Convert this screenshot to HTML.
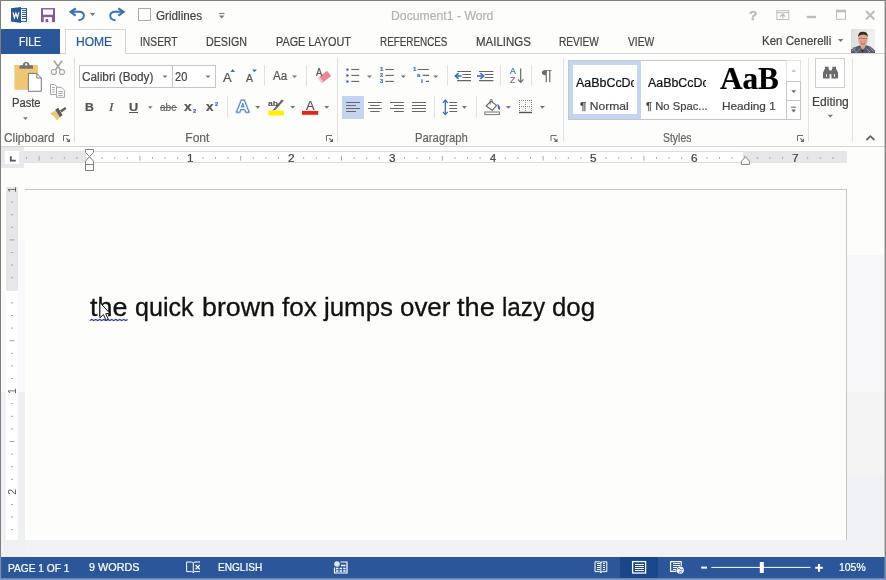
<!DOCTYPE html>
<html lang="en"><head><meta charset="utf-8"><title>Document1 - Word</title>
<style>
html,body{margin:0;padding:0}
body{width:886px;height:580px;position:relative;overflow:hidden;background:#fff;font-family:"Liberation Sans",sans-serif}
.a{position:absolute}
.t{position:absolute;transform-origin:0 0;-webkit-text-stroke:0.22px currentColor;white-space:pre;line-height:1;font-family:"Liberation Sans",sans-serif}
svg{position:absolute;overflow:visible}
.sep{position:absolute;width:1px;background:#e1e1e1}
.arr{position:absolute;width:0;height:0;border-left:2.5px solid transparent;border-right:2.5px solid transparent;border-top:3px solid #777}

</style></head>
<body>
<!-- window frame -->
<div class="a" style="left:0;top:0;width:886px;height:580px;background:#fdfdfc"></div>
<!-- document area bg -->
<div class="a" style="left:0;top:147px;width:886px;height:410px;background:#fdfdfc"></div>
<div class="a" style="left:847px;top:255px;width:38px;height:137px;background:#f8f8fb"></div>
<div class="a" style="left:847px;top:392px;width:38px;height:84px;background:#f4f4f4"></div>
<div class="a" style="left:847px;top:476px;width:38px;height:81px;background:#f1f2f6"></div>
<div class="a" style="left:0;top:540px;width:886px;height:17px;background:#f1f2f5"></div>
<div class="a" style="left:1px;top:291px;width:24px;height:101px;background:#f8f9fb"></div>
<div class="a" style="left:18px;top:240px;width:7px;height:60px;background:#f8f9fb"></div>
<div class="a" style="left:1px;top:392px;width:24px;height:165px;background:#eff0f3"></div>
<!-- page -->
<div class="a" style="left:25px;top:189px;width:822px;height:351px;border:1px solid #c6c6c6;border-bottom:none;border-left:none;background:#fdfdfc;box-sizing:border-box"></div>
<!-- ribbon bottom border -->
<div class="a" style="left:0;top:146px;width:886px;height:1px;background:#d4d4d4"></div>
<!-- tab row line -->
<div class="a" style="left:0;top:53px;width:886px;height:1px;background:#d4d4d4"></div>
<!-- FILE tab -->
<div class="a" style="left:1px;top:29px;width:59px;height:25px;background:#2b579a"></div>
<!-- HOME tab -->
<div class="a" style="left:65px;top:29px;width:61px;height:25px;background:#fdfdfc;border:1px solid #d4d4d4;border-bottom:none;box-sizing:border-box"></div>
<!-- status bar -->
<div class="a" style="left:0;top:557px;width:886px;height:23px;background:#2b579a"></div>
<div class="a" style="left:620px;top:557px;width:38px;height:23px;background:#19478a"></div>
<!-- ruler -->
<div class="a" style="left:1px;top:147px;width:23px;height:21px;background:#e9e9eb"></div>
<div class="a" style="left:5px;top:151px;width:14px;height:13px;background:#fff"></div>
<div class="a" style="left:24px;top:151px;width:823px;height:12px;background:#fff;border-top:1px solid #dedede;border-bottom:1px solid #dedede;box-sizing:border-box"></div>
<div class="a" style="left:24px;top:151px;width:61.5px;height:12px;background:#e6e6e8"></div>
<div class="a" style="left:743px;top:151px;width:104px;height:12px;background:#e6e6e8"></div>
<!-- vertical ruler -->
<div class="a" style="left:6px;top:187px;width:11.5px;height:353px;background:#fff"></div>
<div class="a" style="left:6px;top:187px;width:11.5px;height:104px;background:#e6e6e8"></div>
<!-- ribbon boxes -->
<div class="a" style="left:79px;top:65px;width:137px;height:23px;border:1px solid #c6c6c6;box-sizing:border-box;background:#fff"></div>
<div class="a" style="left:172px;top:65px;width:1px;height:23px;background:#c6c6c6"></div>
<div class="a" style="left:342px;top:96px;width:22px;height:23px;background:#c3d5f0"></div>
<!-- styles gallery -->
<div class="a" style="left:568px;top:60px;width:233px;height:60px;border:1px solid #c6c6c6;box-sizing:border-box;background:#fff"></div>
<div class="a" style="left:569px;top:61px;width:72px;height:58px;background:#c3d5f0"></div>
<div class="a" style="left:573px;top:65px;width:64px;height:49px;background:#fff"></div>
<div class="a" style="left:786px;top:60px;width:15px;height:22px;border:1px solid #e3e3e3;box-sizing:border-box;background:#fff"></div>
<div class="a" style="left:786px;top:81px;width:15px;height:20px;border:1px solid #c6c6c6;box-sizing:border-box;background:#fff"></div>
<div class="a" style="left:786px;top:100px;width:15px;height:20px;border:1px solid #c6c6c6;box-sizing:border-box;background:#fff"></div>
<!-- editing box -->
<div class="a" style="left:815px;top:58px;width:30px;height:30px;border:1px solid #d0d0d0;box-sizing:border-box;background:#fff"></div>
<!-- separators -->
<div class="sep" style="left:74px;top:58px;height:84px"></div>
<div class="sep" style="left:337px;top:58px;height:84px"></div>
<div class="sep" style="left:563px;top:58px;height:84px"></div>
<div class="sep" style="left:808px;top:58px;height:84px"></div>
<div class="sep" style="left:852px;top:58px;height:84px"></div>
<div class="sep" style="left:264px;top:65px;height:21px"></div>
<div class="sep" style="left:306px;top:65px;height:21px"></div>
<div class="sep" style="left:227px;top:96px;height:22px"></div>
<div class="sep" style="left:447px;top:65px;height:21px"></div>
<div class="sep" style="left:500px;top:65px;height:21px"></div>
<div class="sep" style="left:531px;top:65px;height:21px"></div>
<div class="sep" style="left:434px;top:96px;height:22px"></div>
<div class="sep" style="left:476px;top:96px;height:22px"></div>
<!-- checkbox -->
<div class="a" style="left:138px;top:8px;width:13px;height:13px;border:1px solid #ababab;box-sizing:border-box;background:#fff"></div>
<div class="a" style="left:129px;top:112px;width:8.5px;height:1px;background:#555"></div>
<div class="a" style="left:160px;top:107px;width:16.5px;height:1px;background:#666"></div>
<svg width="886" height="580" viewBox="0 0 886 580" style="left:0;top:0">
<!-- Word icon -->
<g>
<rect x="20.5" y="8.6" width="6" height="12.8" fill="#fff" stroke="#2b579a" stroke-width="1"/>
<path d="M21.5 10.5h4M21.5 12.5h4M21.5 14.5h4M21.5 16.5h4M21.5 18.5h4" stroke="#2b579a" stroke-width="1" shape-rendering="crispEdges"/>
<path d="M11 8.3 L21 7 L21 23 L11 21.6Z" fill="#2b579a"/>
<path d="M13 12.4 L14.4 17.6 L15.9 13.4 L17.4 17.6 L18.8 12.4" fill="none" stroke="#fff" stroke-width="1.25"/>
</g>
<!-- Save icon -->
<g>
<rect x="41" y="8.1" width="14" height="14" fill="#83589f"/>
<rect x="43" y="9.5" width="10" height="5.2" fill="#fff"/>
<rect x="43.7" y="17.2" width="8.3" height="4.9" fill="#fff"/>
<rect x="45.6" y="19" width="2.7" height="3.1" fill="#83589f"/>
</g>
<!-- Undo -->
<g fill="none" stroke="#3b6fb6" stroke-width="1.9">
<path d="M71 11.8 H79.5 C85.5 11.8 85.5 19.5 78.5 20.2"/>
<path d="M75.8 8.3 L70.6 11.8 L75.6 15.6" stroke-width="2.2" stroke-linejoin="miter"/>
</g>
<path d="M89.9 13 h5.2 l-2.6 2.9z" fill="#777"/>
<!-- Redo -->
<g fill="none" stroke="#3b6fb6" stroke-width="1.9">
<path d="M122.6 11.8 H115 C108.5 11.8 108.5 19.5 115.5 20.2"/>
<path d="M118.3 8.3 L123.5 11.8 L118.5 15.6" stroke-width="2.2" stroke-linejoin="miter"/>
</g>
<!-- QAT customize -->
<path d="M219 13.5h5.5" stroke="#777" stroke-width="1"/>
<path d="M219 15.5 h5.4 l-2.7 3z" fill="#777"/>
<!-- window controls -->
<g stroke="#bdbdbd" fill="none">
<rect x="776.8" y="10.7" width="12" height="8.8" stroke-width="1"/>
<path d="M776.8 12.7h12" stroke-width="1"/>
<path d="M782.8 18.6v-4.6M780.2 16.6l2.6-2.7l2.6 2.7" stroke-width="1.2"/>
<path d="M806.7 17h9.4" stroke-width="2.4"/>
<rect x="836.5" y="11" width="9" height="8.3" stroke-width="1"/>
<path d="M836 11h10" stroke-width="2.6"/>
<path d="M866 11l8.4 8.4M874.4 11l-8.4 8.4" stroke-width="2.1"/>
</g>
<!-- user dropdown -->
<path d="M838 39 h5.4 l-2.7 2.9z" fill="#777"/>
<!-- avatar -->
<g>
<defs><clipPath id="av"><rect x="851" y="29" width="24" height="24"/></clipPath>
<linearGradient id="avbg" x1="0" x2="1" y1="0" y2="0"><stop offset="0" stop-color="#dedede"/><stop offset="0.5" stop-color="#e9e9e9"/><stop offset="1" stop-color="#f1f1f1"/></linearGradient>
<filter id="bl" x="-20%" y="-20%" width="140%" height="140%"><feGaussianBlur stdDeviation="0.55"/></filter></defs>
<rect x="851" y="29" width="24" height="24" fill="url(#avbg)"/>
<g clip-path="url(#av)"><g filter="url(#bl)">
<path d="M850 54 L850.5 50 Q854 46.8 859.5 45.6 L866.5 45.2 Q872.5 47 876 52 L876 54Z" fill="#555a68"/>
<path d="M859.8 44.5 L862.6 51.5 L866.4 44.5Z" fill="#d9a893"/>
<path d="M861.4 49.5 L862.6 53 L864 49.5Z" fill="#2a2a30"/>
<ellipse cx="862.9" cy="39.6" rx="4.7" ry="6.6" fill="#e0a891"/>
<ellipse cx="861.2" cy="41.5" rx="1.5" ry="1.3" fill="#e58f8f" opacity="0.8"/>
<ellipse cx="865.3" cy="41.3" rx="1.5" ry="1.3" fill="#e58f8f" opacity="0.8"/>
<path d="M858 37 Q858 31.6 863 31.8 Q868 31.8 867.9 37.2 Q866.6 34.4 863 34.4 Q859.4 34.4 858 37Z" fill="#3e2a1e"/>
<path d="M858.3 38.6h9.2" stroke="#4a3a36" stroke-width="0.7" opacity="0.6"/>
<path d="M860.8 43.6 q2.2 1.2 4.4 0" stroke="#a8524e" stroke-width="0.8" fill="none"/>
<path d="M852 51l4-3.4M855.5 53l5-4.6M866.5 48.6l4 3.6M869.5 47.4l4.5 4.6M853 48.5l3 3.5M870 51l-3 3" stroke="#a6acc0" stroke-width="0.8" opacity="0.9"/>
</g></g>
</g>
</svg>
<svg width="886" height="580" viewBox="0 0 886 580" style="left:0;top:0">
<!-- Paste icon -->
<g>
<rect x="14.4" y="65" width="23.4" height="24.8" fill="#f0c573"/>
<path d="M19.5 68.7 V66.2 Q19.5 65.3 20.5 65.3 H22.9 Q23 62 26.2 62 Q29.4 62 29.5 65.3 H32 Q33 65.3 33 66.2 V68.7Z" fill="#737373"/>
<circle cx="26.2" cy="64.5" r="1.15" fill="#fff"/>
<path d="M28.4 73.4 H36.8 L41.3 78 V91.3 H28.4Z" fill="#fff" stroke="#777" stroke-width="1"/>
<path d="M36.8 73.4 V78 H41.3" fill="none" stroke="#777" stroke-width="1"/>
</g>
<path d="M23.1 117.3 h4.8 l-2.4 2.6z" fill="#777"/>
<!-- scissors -->
<g fill="none" stroke="#a6a6a6" stroke-width="1.2">
<circle cx="53.9" cy="72" r="2.5"/>
<circle cx="62" cy="72" r="2.5"/>
</g>
<path d="M54 60.8 L60.6 70M62 60.8 L55.4 70" fill="none" stroke="#a6a6a6" stroke-width="1.7"/>
<!-- copy -->
<g fill="#fff" stroke="#a6a6a6" stroke-width="1">
<path d="M50.5 84.5 H54.5 L57 87 V94.5 H50.5Z"/>
<path d="M52 87.5h3M52 89.7h3M52 91.9h3" stroke-width="0.9"/>
<path d="M56.5 87.3 H61.5 L64.6 90.4 V97.3 H56.5Z"/>
<path d="M58.3 91.5h4.5M58.3 93.5h4.5M58.3 95.5h4.5" stroke-width="0.9"/>
</g>
<!-- format painter -->
<g>
<path d="M50 113.6 L55.6 110.6 L59.6 117.6 L57.2 120.6 Q54.5 116 50 113.6Z" fill="#f0c573"/>
<path d="M55.2 109.8 L58.2 107.8 L62.6 115.2 L59.8 117.2Z" fill="#5c5c5c"/>
<path d="M60 110.4 L65 106.9 L66.4 108.9 L61.4 112.6Z" fill="#5c5c5c"/>
</g>
<!-- dialog launchers -->
<path d="M63.5 141 V135.5 H69" fill="none" stroke="#6a6a6a" stroke-width="1"/><path d="M66.2 138.3 L69 141" stroke="#6a6a6a" stroke-width="1.1"/><path d="M70 138.4 V142 H66.4Z" fill="#6a6a6a"/>
<path d="M326.5 141 V135.5 H332" fill="none" stroke="#6a6a6a" stroke-width="1"/><path d="M329.2 138.3 L332 141" stroke="#6a6a6a" stroke-width="1.1"/><path d="M333 138.4 V142 H329.4Z" fill="#6a6a6a"/>
<path d="M551.0 141 V135.5 H556.5" fill="none" stroke="#6a6a6a" stroke-width="1"/><path d="M553.7 138.3 L556.5 141" stroke="#6a6a6a" stroke-width="1.1"/><path d="M557.5 138.4 V142 H553.9Z" fill="#6a6a6a"/>
<path d="M797.5 141 V135.5 H803" fill="none" stroke="#6a6a6a" stroke-width="1"/><path d="M800.2 138.3 L803 141" stroke="#6a6a6a" stroke-width="1.1"/><path d="M804 138.4 V142 H800.4Z" fill="#6a6a6a"/>
<!-- font combobox arrows -->
<path d="M162.5 75.5 h5 l-2.5 2.6z" fill="#777"/>
<path d="M205.5 75.5 h5 l-2.5 2.6z" fill="#777"/>
<!-- U dropdown etc -->
<path d="M148 106.3 h4.6 l-2.3 2.5z" fill="#777"/>
<!-- grow / shrink triangles -->
<path d="M230.4 72 h4.6 l-2.3-2.9z" fill="#3b6fb6"/>
<path d="M252.1 69.4 h4.8 l-2.4 2.9z" fill="#3b6fb6"/>
<!-- Aa dropdown -->
<path d="M292 75.4 h5 l-2.5 2.6z" fill="#777"/>
<!-- clear formatting eraser -->
<g transform="rotate(-38 324.5 77)">
<rect x="318.5" y="73.6" width="12" height="6.8" rx="1" fill="#ea8a90"/>
<rect x="318.5" y="73.6" width="2.2" height="6.8" fill="#fff" opacity="0.55"/>
</g>
<!-- text effects A -->
<g>
<path d="M236.6 112.2 L241.4 100.2 H244.2 L249 112.2 H245.9 L244.9 109.4 H240.7 L239.7 112.2Z M241.5 107 H244.1 L242.8 103.2Z" fill="#fff" stroke="#b5cdec" stroke-width="2.6" stroke-linejoin="round" fill-rule="evenodd"/>
<path d="M236.6 112.2 L241.4 100.2 H244.2 L249 112.2 H245.9 L244.9 109.4 H240.7 L239.7 112.2Z M241.5 107 H244.1 L242.8 103.2Z" fill="#fff" stroke="#3e74bd" stroke-width="0.9" stroke-linejoin="round" fill-rule="evenodd"/>
</g>
<path d="M255.2 106 h5 l-2.5 2.7z" fill="#777"/>
<!-- highlight -->
<rect x="268.2" y="110.6" width="15.7" height="4.9" fill="#fff000"/>
<path d="M283.9 100.4 L281.8 99.6 L274.6 108 L276 109.4Z" fill="#666"/>
<path d="M274.6 108 L272.6 110.4 L276 109.4Z" fill="#444"/>
<path d="M290.2 106 h5 l-2.5 2.7z" fill="#777"/>
<!-- font color -->
<rect x="302" y="110.9" width="16.2" height="3.9" fill="#e8211a"/>
<path d="M324.2 106 h5 l-2.5 2.7z" fill="#777"/>
</svg>
<svg width="886" height="580" viewBox="0 0 886 580" style="left:0;top:0">
<circle cx="347.4" cy="69.5" r="1.25" fill="#3b6fb6"/>
<path d="M351.3 69.5H359.2" stroke="#666" stroke-width="1.1"/>
<circle cx="347.4" cy="75.4" r="1.25" fill="#3b6fb6"/>
<path d="M351.3 75.4H359.2" stroke="#666" stroke-width="1.1"/>
<circle cx="347.4" cy="81.4" r="1.25" fill="#3b6fb6"/>
<path d="M351.3 81.4H359.2" stroke="#666" stroke-width="1.1"/>
<path d="M367 75.4 h5 l-2.5 2.7z" fill="#777"/>
<path d="M385.3 69.5H393.8" stroke="#666" stroke-width="1.1"/>
<path d="M385.3 75.4H393.8" stroke="#666" stroke-width="1.1"/>
<path d="M385.3 81.4H393.8" stroke="#666" stroke-width="1.1"/>
<path d="M400.8 75.4 h5 l-2.5 2.7z" fill="#777"/>
<path d="M417.8 69.5H428.8M422.7 75.4H429M425.9 81.4H429" stroke="#666" stroke-width="1.1"/>
<path d="M433.2 75.4 h5 l-2.5 2.7z" fill="#777"/>
<path d="M457.2 71.5H471M462.4 74.5H471M462.4 77.5H471M457.2 80.6H471" stroke="#666" stroke-width="1.1"/>
<path d="M455.6 76 H461.6" stroke="#3b6fb6" stroke-width="1.6"/><path d="M458.6 73.2 L455.4 76 L458.6 78.8" stroke="#3b6fb6" stroke-width="1.6" fill="none"/>
<path d="M479 71.5H493.4M484.6 74.5H493.4M484.6 77.5H493.4M479 80.6H493.4" stroke="#666" stroke-width="1.1"/>
<path d="M477 76 H483.2" stroke="#3b6fb6" stroke-width="1.6"/><path d="M480.4 73.2 L483.6 76 L480.4 78.8" stroke="#3b6fb6" stroke-width="1.6" fill="none"/>
<path d="M520.7 68.4V82" stroke="#666" stroke-width="1.2"/><path d="M518 79.4 L520.7 82.4 L523.4 79.4" stroke="#666" stroke-width="1.2" fill="none"/>
<path d="M346.1 102.5H360M346.1 105.5H356M346.1 108.5H360M346.1 111.5H356" stroke="#666" stroke-width="1.1"/>
<path d="M368.1 102.5H381.8M370.2 105.5H379.7M368.1 108.5H381.8M370.2 111.5H379.7" stroke="#666" stroke-width="1.1"/>
<path d="M390 102.5H403.8M394 105.5H403.8M390 108.5H403.8M394 111.5H403.8" stroke="#666" stroke-width="1.1"/>
<path d="M411.9 102.5H425.9M411.9 105.5H425.9M411.9 108.5H425.9M411.9 111.5H425.9" stroke="#666" stroke-width="1.1"/>
<path d="M449.3 102.5H457.2M449.3 105.5H457.2M449.3 108.5H457.2M449.3 111.5H457.2" stroke="#666" stroke-width="1.1"/>
<path d="M445.3 100.2V114.4" stroke="#3b6fb6" stroke-width="1.3"/><path d="M442.9 102.8 L445.3 100 L447.7 102.8M442.9 111.8 L445.3 114.6 L447.7 111.8" stroke="#3b6fb6" stroke-width="1.3" fill="none"/>
<path d="M461.9 106 h5 l-2.5 2.7z" fill="#777"/>
<path d="M491 101.2 L496.6 105.4 L492.2 110.3 L486.2 106Z" fill="#fff" stroke="#666" stroke-width="1.1" stroke-linejoin="round"/>
<path d="M490.2 104.5 V100.5 Q490.2 99.4 491.2 99.4 Q492.2 99.4 492.2 100.5 V102" fill="none" stroke="#666" stroke-width="1"/>
<path d="M497.4 103.8 Q501 106.4 499.8 110 Q497.4 109.4 497.8 106.6Z" fill="#3b6fb6"/>
<rect x="484.8" y="112" width="14.6" height="2.6" fill="#fff" stroke="#777" stroke-width="1"/>
<path d="M505.9 106 h5 l-2.5 2.7z" fill="#777"/>
<path d="M519 100h1v1h-1zM519 102h1v1h-1zM519 104h1v1h-1zM519 106h1v1h-1zM519 108h1v1h-1zM519 110h1v1h-1zM521 100h1v1h-1zM521 106h1v1h-1zM523 100h1v1h-1zM523 106h1v1h-1zM525 100h1v1h-1zM525 102h1v1h-1zM525 104h1v1h-1zM525 106h1v1h-1zM525 108h1v1h-1zM525 110h1v1h-1zM527 100h1v1h-1zM527 106h1v1h-1zM529 100h1v1h-1zM529 106h1v1h-1zM531 100h1v1h-1zM531 102h1v1h-1zM531 104h1v1h-1zM531 106h1v1h-1zM531 108h1v1h-1zM531 110h1v1h-1z" fill="#808080" shape-rendering="crispEdges"/>
<path d="M519 112.5H532" stroke="#555" stroke-width="1.4"/>
<path d="M539.9 106 h5 l-2.5 2.7z" fill="#777"/>
<path d="M791.4 71.9 h4.6 l-2.3-2.9z" fill="#c8c8c8"/>
<path d="M791.4 90.3 h4.6 l-2.3 2.8z" fill="#666"/>
<path d="M791 107.2h5.2" stroke="#666" stroke-width="1"/>
<path d="M791.3 109.6 h4.6 l-2.3 2.8z" fill="#666"/>
<g fill="#6a6a6a">
<path d="M823 78.6 V72.5 L825 68.5 V66.8 H828.6 V68.5 L829.6 70.5 V78.6Z"/>
<path d="M838 78.6 V72.5 L836 68.5 V66.8 H832.4 V68.5 L831.4 70.5 V78.6Z"/>
<rect x="829" y="70.5" width="3" height="3.6"/>
</g>
<path d="M826.5 74.2v2.6M834.5 74.2v2.6" stroke="#fff" stroke-width="1"/>
<path d="M827.6 114.7 h5.4 l-2.7 2.8z" fill="#777"/>
<path d="M866.4 140 L870.4 136.2 L874.4 140" fill="none" stroke="#666" stroke-width="1.8"/>
<path d="M26.5 157V158.9" stroke="#adadad" stroke-width="1"/>
<path d="M39.1 155.8V160.6" stroke="#a8a8a8" stroke-width="1"/>
<path d="M51.7 157V158.9" stroke="#adadad" stroke-width="1"/>
<path d="M64.3 157V158.9" stroke="#adadad" stroke-width="1"/>
<path d="M76.9 157V158.9" stroke="#adadad" stroke-width="1"/>
<path d="M102.1 157V158.9" stroke="#adadad" stroke-width="1"/>
<path d="M114.7 157V158.9" stroke="#adadad" stroke-width="1"/>
<path d="M127.3 157V158.9" stroke="#adadad" stroke-width="1"/>
<path d="M139.9 155.8V160.6" stroke="#a8a8a8" stroke-width="1"/>
<path d="M152.5 157V158.9" stroke="#adadad" stroke-width="1"/>
<path d="M165.1 157V158.9" stroke="#adadad" stroke-width="1"/>
<path d="M177.7 157V158.9" stroke="#adadad" stroke-width="1"/>
<path d="M202.9 157V158.9" stroke="#adadad" stroke-width="1"/>
<path d="M215.5 157V158.9" stroke="#adadad" stroke-width="1"/>
<path d="M228.1 157V158.9" stroke="#adadad" stroke-width="1"/>
<path d="M240.7 155.8V160.6" stroke="#a8a8a8" stroke-width="1"/>
<path d="M253.3 157V158.9" stroke="#adadad" stroke-width="1"/>
<path d="M265.9 157V158.9" stroke="#adadad" stroke-width="1"/>
<path d="M278.5 157V158.9" stroke="#adadad" stroke-width="1"/>
<path d="M303.7 157V158.9" stroke="#adadad" stroke-width="1"/>
<path d="M316.3 157V158.9" stroke="#adadad" stroke-width="1"/>
<path d="M328.9 157V158.9" stroke="#adadad" stroke-width="1"/>
<path d="M341.5 155.8V160.6" stroke="#a8a8a8" stroke-width="1"/>
<path d="M354.1 157V158.9" stroke="#adadad" stroke-width="1"/>
<path d="M366.7 157V158.9" stroke="#adadad" stroke-width="1"/>
<path d="M379.3 157V158.9" stroke="#adadad" stroke-width="1"/>
<path d="M404.5 157V158.9" stroke="#adadad" stroke-width="1"/>
<path d="M417.1 157V158.9" stroke="#adadad" stroke-width="1"/>
<path d="M429.7 157V158.9" stroke="#adadad" stroke-width="1"/>
<path d="M442.3 155.8V160.6" stroke="#a8a8a8" stroke-width="1"/>
<path d="M454.9 157V158.9" stroke="#adadad" stroke-width="1"/>
<path d="M467.5 157V158.9" stroke="#adadad" stroke-width="1"/>
<path d="M480.1 157V158.9" stroke="#adadad" stroke-width="1"/>
<path d="M505.3 157V158.9" stroke="#adadad" stroke-width="1"/>
<path d="M517.9 157V158.9" stroke="#adadad" stroke-width="1"/>
<path d="M530.5 157V158.9" stroke="#adadad" stroke-width="1"/>
<path d="M543.1 155.8V160.6" stroke="#a8a8a8" stroke-width="1"/>
<path d="M555.7 157V158.9" stroke="#adadad" stroke-width="1"/>
<path d="M568.3 157V158.9" stroke="#adadad" stroke-width="1"/>
<path d="M580.9 157V158.9" stroke="#adadad" stroke-width="1"/>
<path d="M606.1 157V158.9" stroke="#adadad" stroke-width="1"/>
<path d="M618.7 157V158.9" stroke="#adadad" stroke-width="1"/>
<path d="M631.3 157V158.9" stroke="#adadad" stroke-width="1"/>
<path d="M643.9 155.8V160.6" stroke="#a8a8a8" stroke-width="1"/>
<path d="M656.5 157V158.9" stroke="#adadad" stroke-width="1"/>
<path d="M669.1 157V158.9" stroke="#adadad" stroke-width="1"/>
<path d="M681.7 157V158.9" stroke="#adadad" stroke-width="1"/>
<path d="M706.9 157V158.9" stroke="#adadad" stroke-width="1"/>
<path d="M719.5 157V158.9" stroke="#adadad" stroke-width="1"/>
<path d="M732.1 157V158.9" stroke="#adadad" stroke-width="1"/>
<path d="M744.7 155.8V160.6" stroke="#a8a8a8" stroke-width="1"/>
<path d="M757.3 157V158.9" stroke="#adadad" stroke-width="1"/>
<path d="M769.9 157V158.9" stroke="#adadad" stroke-width="1"/>
<path d="M782.5 157V158.9" stroke="#adadad" stroke-width="1"/>
<path d="M807.7 157V158.9" stroke="#adadad" stroke-width="1"/>
<path d="M820.3 157V158.9" stroke="#adadad" stroke-width="1"/>
<path d="M832.9 157V158.9" stroke="#adadad" stroke-width="1"/>
<path d="M11 202.1H13" stroke="#a8a8a8" stroke-width="1"/>
<path d="M11 214.7H13" stroke="#a8a8a8" stroke-width="1"/>
<path d="M11 227.3H13" stroke="#a8a8a8" stroke-width="1"/>
<path d="M9.5 239.9H14.5" stroke="#a8a8a8" stroke-width="1"/>
<path d="M11 252.5H13" stroke="#a8a8a8" stroke-width="1"/>
<path d="M11 265.1H13" stroke="#a8a8a8" stroke-width="1"/>
<path d="M11 277.7H13" stroke="#a8a8a8" stroke-width="1"/>
<path d="M11 302.9H13" stroke="#a8a8a8" stroke-width="1"/>
<path d="M11 315.5H13" stroke="#a8a8a8" stroke-width="1"/>
<path d="M11 328.1H13" stroke="#a8a8a8" stroke-width="1"/>
<path d="M9.5 340.7H14.5" stroke="#a8a8a8" stroke-width="1"/>
<path d="M11 353.3H13" stroke="#a8a8a8" stroke-width="1"/>
<path d="M11 365.9H13" stroke="#a8a8a8" stroke-width="1"/>
<path d="M11 378.5H13" stroke="#a8a8a8" stroke-width="1"/>
<path d="M11 403.7H13" stroke="#a8a8a8" stroke-width="1"/>
<path d="M11 416.3H13" stroke="#a8a8a8" stroke-width="1"/>
<path d="M11 428.9H13" stroke="#a8a8a8" stroke-width="1"/>
<path d="M9.5 441.5H14.5" stroke="#a8a8a8" stroke-width="1"/>
<path d="M11 454.1H13" stroke="#a8a8a8" stroke-width="1"/>
<path d="M11 466.7H13" stroke="#a8a8a8" stroke-width="1"/>
<path d="M11 479.3H13" stroke="#a8a8a8" stroke-width="1"/>
<path d="M11 504.5H13" stroke="#a8a8a8" stroke-width="1"/>
<path d="M11 517.1H13" stroke="#a8a8a8" stroke-width="1"/>
<path d="M11 529.7H13" stroke="#a8a8a8" stroke-width="1"/>
<path d="M10.8 156.2 V160.6 H15.8" fill="none" stroke="#555" stroke-width="1.8"/>
<path d="M85.5 149.5 H93.5 V152.4 L89.5 156.7 L85.5 152.4Z" fill="#fdfdfc" stroke="#808080" stroke-width="1" stroke-linejoin="miter"/>
<path d="M89.5 156.7 L93.5 161.2 V164.5 H85.5 V161.2Z" fill="#fdfdfc" stroke="#808080" stroke-width="1" stroke-linejoin="miter"/>
<rect x="85.5" y="164.5" width="8" height="6" fill="#fdfdfc" stroke="#808080" stroke-width="1"/>
<path d="M745.5 156.8 L749.6 161.3 V164.4 H741.4 V161.3Z" fill="#fdfdfc" stroke="#808080" stroke-width="1" stroke-linejoin="round"/>
<path d="M89.7 320.6 L91.7 319.4 L93.7 320.6 L95.7 319.4 L97.7 320.6 L99.7 319.4 L101.7 320.6 L103.7 319.4 L105.7 320.6 L107.7 319.4 L109.7 320.6 L111.7 319.4 L113.7 320.6 L115.7 319.4 L117.7 320.6 L119.7 319.4 L121.7 320.6 L123.7 319.4 L125.7 320.6 L127.7 319.4" fill="none" stroke="#2535b5" stroke-width="1.2" stroke-linejoin="round"/>
<path d="M186.6 562 H191.5 Q193 562 193.3 563.5 V572.8 Q193 571.6 191.5 571.6 H186.6Z" fill="none" stroke="#fff" stroke-width="1"/>
<path d="M200 562 H195 Q193.6 562 193.3 563.5" fill="none" stroke="#fff" stroke-width="1"/><path d="M200 571.6H195Q193.6 571.6 193.3 572.8" fill="none" stroke="#fff" stroke-width="1"/>
<path d="M195.6 565 L199.8 569.4M199.8 565 L195.6 569.4" stroke="#fff" stroke-width="1.3"/>
<circle cx="337" cy="564" r="2.8" fill="#dfe6f2"/>
<path d="M340.5 562H347V573H334.5V567.5" fill="none" stroke="#fff" stroke-width="1.2"/>
<path d="M336 568.5h2.4M339.6 568.5h2.4M343.2 568.5h2.4M336 571h2.4M339.6 571h2.4M343.2 571h2.4M341 565.5h4.6" stroke="#fff" stroke-width="1.5"/>
<path d="M595 561.8 H599.5 Q600.8 561.8 600.9 563 Q601 561.8 602.3 561.8 H606.8 V571.6 H602.3 Q601 571.6 600.9 573 Q600.8 571.6 599.5 571.6 H595Z" fill="none" stroke="#fff" stroke-width="1"/>
<path d="M600.9 563V572.6" stroke="#fff" stroke-width="1"/>
<path d="M597 563.5h2.5M597 565.5h2.5M597 567.5h2.5M597 569.5h2.5M602.5 563.5h2.5M602.5 565.5h2.5M602.5 567.5h2.5M602.5 569.5h2.5" stroke="#fff" stroke-width="1" shape-rendering="crispEdges"/>
<rect x="632.6" y="561.6" width="13" height="11.4" fill="none" stroke="#fff" stroke-width="1.3"/>
<path d="M635 564.5h8.5M635 566.5h8.5M635 568.5h8.5M635 570.5h8.5" stroke="#fff" stroke-width="1" shape-rendering="crispEdges"/>
<path d="M676.5 571.4 H670.6 V561.6 H681.2 V566" fill="none" stroke="#fff" stroke-width="1.1"/>
<path d="M672.5 563.5h7M672.5 565.5h7M672.5 567.5h4M672.5 569.5h3" stroke="#fff" stroke-width="1" shape-rendering="crispEdges"/>
<circle cx="680.2" cy="570.2" r="3.6" fill="#fff"/>
<path d="M677.6 569.2 q1.4 -1.6 2.6 0 q1 1.4 2.6 0.4M679 572.6 q1 -1.4 2.6 -0.6" stroke="#2b579a" stroke-width="0.9" fill="none"/>
<path d="M701.2 567.6H707" stroke="#fff" stroke-width="2"/>
<path d="M711.3 567.4H810.5" stroke="#fff" stroke-width="1"/>
<rect x="759.8" y="562" width="4" height="11" fill="#fff"/>
<path d="M815.2 567.8H822.8M819 564V571.7" stroke="#fff" stroke-width="2"/>
<path d="M0 0.5H886" stroke="#808080" stroke-width="1"/>
<path d="M0.5 0V580" stroke="#7e7e7e" stroke-width="1"/>
<path d="M885.3 0V580" stroke="#858585" stroke-width="1.4"/>
<rect x="0" y="578.2" width="886" height="1.8" fill="#7f95ba"/><rect x="0" y="557" width="1.1" height="23" fill="#7a8eb3"/><rect x="884.6" y="557" width="1.4" height="23" fill="#7a8eb3"/>
</svg><svg width="886" height="580" viewBox="0 0 886 580" style="left:0;top:0;will-change:transform" font-family="'Liberation Sans',sans-serif" font-size="10.5" fill="#555">
<text transform="translate(15.6 192.4) rotate(-90)">1</text>
<text transform="translate(15.6 394) rotate(-90)">1</text>
<text transform="translate(15.6 494.8) rotate(-90)">2</text>
</svg>

<div class="a" style="left:0;top:0;width:886px;height:580px;will-change:transform">
<span class="t" style="left:156.01px;top:10.00px;font-size:12px;color:#444;transform:scaleX(0.9733);">Gridlines</span>
<span class="t" style="left:390.77px;top:10.00px;font-size:12.5px;color:#b2b2b2;transform:scaleX(0.9782);">Document1 - Word</span>
<span class="t" style="left:19.37px;top:36.00px;font-size:12.4px;color:#fff;transform:scaleX(0.8400);">FILE</span>
<span class="t" style="left:76.27px;top:36.00px;font-size:12.4px;color:#2b579a;transform:scaleX(0.9722);">HOME</span>
<span class="t" style="left:140.17px;top:36.00px;font-size:12.4px;color:#444;transform:scaleX(0.8295);">INSERT</span>
<span class="t" style="left:206.35px;top:36.00px;font-size:12.4px;color:#444;transform:scaleX(0.8630);">DESIGN</span>
<span class="t" style="left:275.54px;top:36.00px;font-size:12.4px;color:#444;transform:scaleX(0.8743);">PAGE LAYOUT</span>
<span class="t" style="left:379.90px;top:36.00px;font-size:12.4px;color:#444;transform:scaleX(0.7964);">REFERENCES</span>
<span class="t" style="left:475.80px;top:36.00px;font-size:12.4px;color:#444;transform:scaleX(0.9276);">MAILINGS</span>
<span class="t" style="left:558.69px;top:36.00px;font-size:12.4px;color:#444;transform:scaleX(0.8166);">REVIEW</span>
<span class="t" style="left:628.40px;top:36.00px;font-size:12.4px;color:#444;transform:scaleX(0.8252);">VIEW</span>
<span class="t" style="left:762.30px;top:35.00px;font-size:12.3px;color:#444;transform:scaleX(0.9379);">Ken Cenerelli</span>
<span class="t" style="left:11.82px;top:97.00px;font-size:12.3px;color:#444;transform:scaleX(0.9091);">Paste</span>
<span class="t" style="left:4.01px;top:132.00px;font-size:12.1px;color:#666;transform:scaleX(0.9754);">Clipboard</span>
<span class="t" style="left:82.02px;top:71.00px;font-size:12.3px;color:#444;transform:scaleX(0.9592);">Calibri (Body)</span>
<span class="t" style="left:175.31px;top:71.00px;font-size:12.3px;color:#444;transform:scaleX(0.9000);">20</span>
<span class="t" style="left:185.25px;top:132.00px;font-size:12.1px;color:#666;transform:scaleX(1.0000);">Font</span>
<span class="t" style="left:414.80px;top:132.00px;font-size:12.1px;color:#666;transform:scaleX(0.9364);">Paragraph</span>
<span class="t" style="left:663.17px;top:132.00px;font-size:12.1px;color:#666;transform:scaleX(0.8620);">Styles</span>
<span class="t" style="left:812.07px;top:96.00px;font-size:12.3px;color:#444;transform:scaleX(0.9793);">Editing</span>
<div class="a" style="left:0;top:0;width:634px;height:150px;overflow:hidden"><span class="t" style="left:576.15px;top:77.00px;font-size:12.3px;color:#111;transform:scaleX(1.0108);">AaBbCcDc</span></div>
<div class="a" style="left:0;top:0;width:705.9px;height:150px;overflow:hidden"><span class="t" style="left:648.15px;top:77.00px;font-size:12.3px;color:#111;transform:scaleX(1.0091);">AaBbCcDc</span></div>
<span class="t" style="left:580.14px;top:101.00px;font-size:11.8px;color:#444;transform:scaleX(1.0225);">¶ Normal</span>
<span class="t" style="left:646.46px;top:101.00px;font-size:11.8px;color:#444;transform:scaleX(0.9528);">¶ No Spac...</span>
<span class="t" style="left:721.75px;top:101.00px;font-size:11.8px;color:#444;transform:scaleX(0.9991);">Heading 1</span>
<span class="t" style="left:720.10px;top:64.00px;font-size:30.6px;color:#000;transform:scaleX(1.0193);font-family:'Liberation Serif',serif;font-weight:bold;">AaB</span>
<span class="t" style="left:84.77px;top:102.00px;font-size:11.5px;color:#555;transform:scaleX(1.0667);font-weight:bold;">B</span>
<span class="t" style="left:109.23px;top:101.00px;font-size:12px;color:#555;transform:scaleX(1.1200);font-family:'Liberation Serif',serif;font-style:italic;">I</span>
<span class="t" style="left:128.75px;top:102.00px;font-size:11.5px;color:#555;transform:scaleX(1.1034);font-weight:bold;">U</span>
<span class="t" style="left:160.08px;top:102.00px;font-size:11.5px;color:#666;transform:scaleX(0.8712);">abc</span>
<span class="t" style="left:184.30px;top:100.00px;font-size:13px;color:#555;transform:scaleX(1.0621);font-weight:bold;">x</span>
<span class="t" style="left:192.80px;top:109.00px;font-size:5.5px;color:#3b6fb6;transform:scaleX(1.0333);font-weight:bold;">2</span>
<span class="t" style="left:206.00px;top:100.00px;font-size:13px;color:#555;transform:scaleX(1.0345);font-weight:bold;">x</span>
<span class="t" style="left:214.80px;top:102.00px;font-size:5.5px;color:#3b6fb6;transform:scaleX(1.0333);font-weight:bold;">2</span>
<span class="t" style="left:222.55px;top:71.00px;font-size:13.2px;color:#555;transform:scaleX(0.9838);">A</span>
<span class="t" style="left:245.64px;top:73.00px;font-size:10.8px;color:#555;transform:scaleX(0.9733);">A</span>
<span class="t" style="left:272.54px;top:70.00px;font-size:12px;color:#555;transform:scaleX(0.9639);">Aa</span>
<span class="t" style="left:315.66px;top:68.00px;font-size:10.4px;color:#555;transform:scaleX(0.9000);">A</span>
<span class="t" style="left:268.22px;top:100.00px;font-size:7.8px;color:#444;transform:scaleX(1.1176);font-weight:bold;-webkit-text-stroke:0;">ab</span>
<span class="t" style="left:305.95px;top:100.00px;font-size:12.8px;color:#555;transform:scaleX(1.0000);">A</span>
<span class="t" style="left:379.75px;top:66.00px;font-size:6.2px;color:#3b6fb6;transform:scaleX(0.9846);font-weight:bold;">1</span>
<span class="t" style="left:380.00px;top:72.00px;font-size:6.2px;color:#3b6fb6;transform:scaleX(0.9143);font-weight:bold;">2</span>
<span class="t" style="left:380.00px;top:78.00px;font-size:6.2px;color:#3b6fb6;transform:scaleX(0.9143);font-weight:bold;">3</span>
<span class="t" style="left:412.66px;top:66.00px;font-size:6.2px;color:#3b6fb6;transform:scaleX(0.9538);font-weight:bold;">1</span>
<span class="t" style="left:416.91px;top:72.00px;font-size:6.2px;color:#3b6fb6;transform:scaleX(0.9000);font-weight:bold;">a</span>
<span class="t" style="left:421.32px;top:78.00px;font-size:6.2px;color:#3b6fb6;transform:scaleX(1.1200);font-weight:bold;">i</span>
<span class="t" style="left:510.25px;top:67.00px;font-size:8.8px;color:#3b6fb6;transform:scaleX(0.9920);">A</span>
<span class="t" style="left:510.00px;top:76.00px;font-size:8.4px;color:#8a5ea8;transform:scaleX(1.0400);">Z</span>
<span class="t" style="left:541.26px;top:68.00px;font-size:14.6px;color:#6a6a6a;transform:scaleX(1.4815);-webkit-text-stroke:0;">¶</span>
<span class="t" style="left:749.39px;top:9.00px;font-size:13.4px;color:#bcbcbc;transform:scaleX(1.0143);font-weight:bold;-webkit-text-stroke:0.4px #bcbcbc;">?</span>
<span class="t" style="left:7.82px;top:563.00px;font-size:11.3px;color:#fff;transform:scaleX(0.9011);">PAGE 1 OF 1</span>
<span class="t" style="left:89.46px;top:562.00px;font-size:11.3px;color:#fff;transform:scaleX(0.9569);">9 WORDS</span>
<span class="t" style="left:218.03px;top:562.00px;font-size:11.3px;color:#fff;transform:scaleX(0.8933);">ENGLISH</span>
<span class="t" style="left:839.41px;top:562.00px;font-size:11.3px;color:#fff;transform:scaleX(0.9250);">105%</span>
<span class="t" style="left:186.94px;top:153.00px;font-size:10.5px;color:#444;transform:scaleX(1.1200);">1</span>
<span class="t" style="left:287.88px;top:153.00px;font-size:10.5px;color:#444;transform:scaleX(1.1200);">2</span>
<span class="t" style="left:388.68px;top:153.00px;font-size:10.5px;color:#444;transform:scaleX(1.1200);">3</span>
<span class="t" style="left:489.70px;top:153.00px;font-size:10.5px;color:#444;transform:scaleX(1.0435);">4</span>
<span class="t" style="left:590.28px;top:153.00px;font-size:10.5px;color:#444;transform:scaleX(1.1200);">5</span>
<span class="t" style="left:691.08px;top:153.00px;font-size:10.5px;color:#444;transform:scaleX(1.1200);">6</span>
<span class="t" style="left:791.88px;top:153.00px;font-size:10.5px;color:#444;transform:scaleX(1.1200);">7</span>
<span class="t" style="left:90.34px;top:295.00px;font-size:25.8px;color:#111;transform:scaleX(1.0417);-webkit-text-stroke:0.3px #111;">the</span>
<span class="t" style="left:135.37px;top:295.00px;font-size:25.8px;color:#111;transform:scaleX(0.9724);-webkit-text-stroke:0.3px #111;">quick</span>
<span class="t" style="left:201.54px;top:295.00px;font-size:25.8px;color:#111;transform:scaleX(1.0394);-webkit-text-stroke:0.3px #111;">brown</span>
<span class="t" style="left:281.95px;top:295.00px;font-size:25.8px;color:#111;transform:scaleX(1.0147);-webkit-text-stroke:0.3px #111;">fox</span>
<span class="t" style="left:323.85px;top:295.00px;font-size:25.8px;color:#111;transform:scaleX(1.0022);-webkit-text-stroke:0.3px #111;">jumps</span>
<span class="t" style="left:399.85px;top:295.00px;font-size:25.8px;color:#111;transform:scaleX(1.0030);-webkit-text-stroke:0.3px #111;">over</span>
<span class="t" style="left:457.14px;top:295.00px;font-size:25.8px;color:#111;transform:scaleX(1.0532);-webkit-text-stroke:0.3px #111;">the</span>
<span class="t" style="left:501.59px;top:295.00px;font-size:25.8px;color:#111;transform:scaleX(0.9371);-webkit-text-stroke:0.3px #111;">lazy</span>
<span class="t" style="left:551.85px;top:295.00px;font-size:25.8px;color:#111;transform:scaleX(1.0012);-webkit-text-stroke:0.3px #111;">dog</span>
</div>
<svg width="886" height="580" viewBox="0 0 886 580" style="left:0;top:0">
<path transform="translate(99.9 302.4) scale(0.93)" d="M0 0 L0 16.6 L3.8 13 L6.6 19.3 L9 18.2 L6.3 12.1 L11 12.1 Z" fill="#fff" stroke="#111" stroke-width="1.05" stroke-linejoin="miter"/>
</svg>

</body></html>
